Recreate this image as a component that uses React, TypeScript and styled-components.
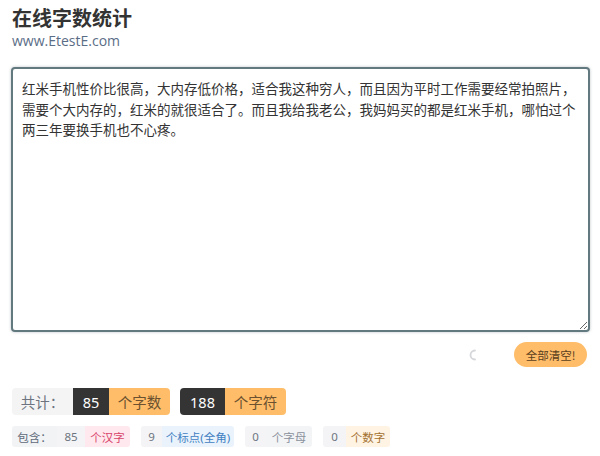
import React, { useState } from "react";
import styled, { createGlobalStyle } from "styled-components";

const Global = createGlobalStyle`
  html, body { margin: 0; padding: 0; background: #fff; }
  body { font-family: "Noto Sans", "Noto Sans CJK SC", sans-serif; color: #333; }
`;

const Page = styled.div`
  width: 600px;
  height: 456px;
  box-sizing: border-box;
  padding: 0 10px 0 11px;
  overflow: hidden;
`;

const Title = styled.h1`
  margin: 0;
  padding: 4px 0 0 1px;
  font-size: 20px;
  line-height: 28px;
  font-weight: 700;
  color: #333;
  font-family: "Noto Sans CJK SC", sans-serif;
`;

const Site = styled.div`
  padding-left: 1px;
  font-size: 14px;
  line-height: 18px;
  color: #5a6d86;
  font-family: "Open Sans", "Noto Sans", sans-serif;
`;

const Editor = styled.textarea`
  display: block;
  margin-top: 17px;
  width: 579px;
  height: 265px;
  box-sizing: border-box;
  padding: 9px 9px;
  border: 2px solid #62797f;
  border-radius: 4px;
  box-shadow: 0 0 3px rgba(60, 80, 90, 0.35);
  outline: none;
  resize: both;
  font-family: "Noto Sans CJK SC", sans-serif;
  font-size: 13.5px;
  line-height: 20.5px;
  color: #333;
`;

const ActionRow = styled.div`
  display: flex;
  align-items: center;
  justify-content: flex-end;
  gap: 34px;
  margin-top: 10px;
  padding-right: 3px;
`;

const Spinner = styled.svg`
  width: 12px;
  height: 12px;
`;

const ClearButton = styled.button`
  height: 25px;
  width: 73px;
  border: none;
  border-radius: 13px;
  background: #ffbd69;
  color: #5a4020;
  font-family: "Noto Sans CJK SC", sans-serif;
  font-size: 11.5px;
  padding: 0;
  cursor: pointer;
`;

const StatsRow = styled.div`
  display: flex;
  gap: 10px;
  margin-top: 21px;
  padding-left: 1px;
`;

const Group = styled.div`
  display: flex;
  height: 27px;
  border-radius: 4px;
  overflow: hidden;
`;

type CellKind = "label" | "dark" | "orange";

const Cell = styled.span<{ $kind: CellKind; $w: number }>`
  display: flex;
  align-items: center;
  justify-content: center;
  width: ${(p) => p.$w}px;
  font-size: 14.5px;
  font-family: "Noto Sans", "Noto Sans CJK SC", sans-serif;
  background: ${(p) =>
    p.$kind === "dark" ? "#343434" : p.$kind === "orange" ? "#ffbd69" : "#f4f4f5"};
  color: ${(p) =>
    p.$kind === "dark" ? "#fff" : p.$kind === "orange" ? "#6b5130" : "#6d7480"};
`;

const DetailRow = styled.div`
  display: flex;
  gap: 11px;
  margin-top: 11px;
  padding-left: 1px;
`;

const Chip = styled.div`
  display: flex;
  height: 21px;
  border-radius: 3px;
  overflow: hidden;
`;

type Tone = "label" | "num" | "pink" | "blue" | "gray" | "orange";

const tones: Record<Tone, [string, string]> = {
  label: ["#f2f3f5", "#5f6b7a"],
  num: ["#f4f4f6", "#6d7480"],
  pink: ["#ffe9ee", "#d8436a"],
  blue: ["#eaf3fc", "#3f80c2"],
  gray: ["#f3f4f6", "#8a919c"],
  orange: ["#fff3e4", "#a3712e"],
};

const Piece = styled.span<{ $tone: Tone; $w: number }>`
  display: flex;
  align-items: center;
  justify-content: center;
  width: ${(p) => p.$w}px;
  font-size: 11.5px;
  font-family: "Noto Sans", "Noto Sans CJK SC", sans-serif;
  background: ${(p) => tones[p.$tone][0]};
  color: ${(p) => tones[p.$tone][1]};
`;

const INITIAL =
  "红米手机性价比很高，大内存低价格，适合我这种穷人，而且因为平时工作需要经常拍照片，需要个大内存的，红米的就很适合了。而且我给我老公，我妈妈买的都是红米手机，哪怕过个两三年要换手机也不心疼。";

export default function App() {
  const [text, setText] = useState(INITIAL);
  return (
    <>
      <Global />
      <Page>
        <Title>在线字数统计</Title>
        <Site>www.EtestE.com</Site>
        <Editor value={text} onChange={(e) => setText(e.target.value)} spellCheck={false} />
        <ActionRow>
          <Spinner viewBox="0 0 12 12">
            <path d="M7 1.5 A4.5 4.5 0 0 0 7 10.5" fill="none" stroke="#d4d6da" strokeWidth="1.8" strokeLinecap="round" />
          </Spinner>
          <ClearButton onClick={() => setText("")}>全部清空!</ClearButton>
        </ActionRow>
        <StatsRow>
          <Group>
            <Cell $kind="label" $w={61}>共计：</Cell>
            <Cell $kind="dark" $w={36}>85</Cell>
            <Cell $kind="orange" $w={61}>个字数</Cell>
          </Group>
          <Group>
            <Cell $kind="dark" $w={45}>188</Cell>
            <Cell $kind="orange" $w={61}>个字符</Cell>
          </Group>
        </StatsRow>
        <DetailRow>
          <Chip>
            <Piece $tone="label" $w={45}>包含：</Piece>
            <Piece $tone="num" $w={28}>85</Piece>
            <Piece $tone="pink" $w={45}>个汉字</Piece>
          </Chip>
          <Chip>
            <Piece $tone="num" $w={21}>9</Piece>
            <Piece $tone="blue" $w={72}>个标点(全角)</Piece>
          </Chip>
          <Chip>
            <Piece $tone="num" $w={21}>0</Piece>
            <Piece $tone="gray" $w={46}>个字母</Piece>
          </Chip>
          <Chip>
            <Piece $tone="num" $w={23}>0</Piece>
            <Piece $tone="orange" $w={44}>个数字</Piece>
          </Chip>
        </DetailRow>
      </Page>
    </>
  );
}
